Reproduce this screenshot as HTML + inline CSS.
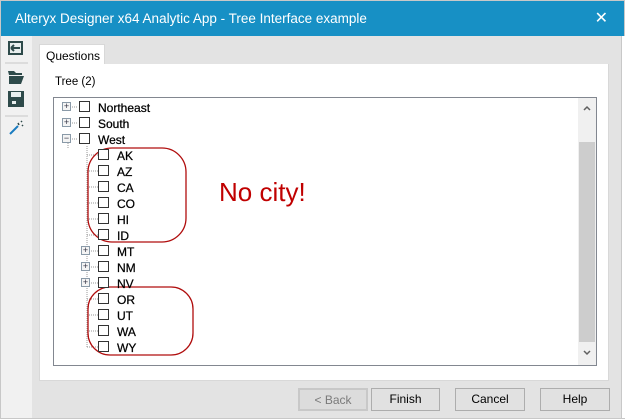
<!DOCTYPE html>
<html><head><style>
*{margin:0;padding:0;box-sizing:border-box}
body{width:625px;height:419px;background:#e3e3e3;font-family:"Liberation Sans",sans-serif;font-size:12px;position:relative;overflow:hidden;color:#000}
.a{position:absolute}
.title{left:0;top:0;width:625px;height:36px;background:#1790c5;color:#fff;font-size:13.5px;line-height:36px;padding-left:14px;border:1px solid #c8c8c8;border-bottom:none}
.cb{position:absolute;width:11px;height:11px;border:1px solid #333;background:#fff}
.ex{position:absolute;width:9px;height:9px;border:1px solid #8a9aa8;background:#f4f4f4;font-size:9px;line-height:7px;text-align:center;color:#334}
.t{position:absolute;font-size:12px;color:#000;-webkit-text-stroke:0.25px #000}
.btn{position:absolute;top:388px;height:23px;border:1px solid #adadad;background:#e1e1e1;text-align:center;line-height:21px;font-size:12px}
</style></head><body>
<div class="a title">Alteryx Designer x64 Analytic App - Tree Interface example<span style="position:absolute;right:16px;top:0;font-size:16px">✕</span></div>
<div class="a" style="left:0;top:36px;width:32px;height:383px;background:#f1f1f1;border-left:1px solid #c8c8c8"></div>
<div class="a" style="left:621px;top:36px;width:4px;height:383px;background:#fff;border-left:1px solid #c8c8c8"></div>
<svg class="a" style="left:0;top:36px" width="32" height="110">
<rect x="8" y="5" width="15" height="14" fill="#2e4a4a"/><rect x="10" y="7" width="11" height="10" fill="#e8eeee"/><path d="M11 12h9M11 12l3-3M11 12l3 3" stroke="#2e4a4a" stroke-width="2" fill="none"/>
<line x1="5" y1="27" x2="28" y2="27" stroke="#c8c8c8"/>
<path d="M8 35h6l2 2h6v2h-13z" fill="#2e4a4a"/><path d="M9 40h15l-3 8h-12z" fill="#2e4a4a"/>
<rect x="8" y="55" width="16" height="16" fill="#2e4a4a"/><rect x="11" y="56" width="10" height="5" fill="#e8eeee"/><rect x="12" y="65" width="4" height="3" fill="#e8eeee"/>
<line x1="5" y1="80" x2="28" y2="80" stroke="#c8c8c8"/>
<path d="M10 98l8-8" stroke="#1a7cc0" stroke-width="2"/><path d="M18 87l1 2M22 89l1 1M21 85l1 1" stroke="#2e4a4a" stroke-width="1.5"/>
</svg>
<div class="a" style="left:39px;top:44px;width:66px;height:21px;background:#fff;border:1px solid #d8d8d8;border-bottom:none;padding:4px 0 0 6px;font-size:12px">Questions</div>
<div class="a" style="left:39px;top:64px;width:570px;height:317px;background:#fff;border:1px solid #d8d8d8;border-top:none"></div>
<div class="a" style="left:55px;top:76px;font-size:11.5px">Tree (2)</div>
<div class="a" style="left:53px;top:97px;width:544px;height:269px;border:1px solid #828790;background:#fff"></div>
<div class="a" style="left:578px;top:98px;width:18px;height:267px;background:#f0f0f0"></div>
<div class="a" style="left:579px;top:142px;width:16px;height:200px;background:#cdcdcd"></div>
<svg class="a" style="left:578px;top:98px" width="18" height="267">
<path d="M6 12l3-3 3 3M6 253l3 3 3-3" stroke="#606060" stroke-width="1.5" fill="none"/>
</svg>
<svg class="a" style="left:0;top:0" width="625" height="419">
<g stroke="#999" stroke-dasharray="1,1" fill="none">
<path d="M72 107h6M72 123h6M72 139h6M68 143v5"/>
<path d="M87 146v201M87 155h11M87 171h11M87 187h11M87 203h11M87 219h11M87 235h11M91 251h7M91 267h7M91 283h7M87 299h11M87 315h11M87 331h11M87 347h11"/>
</g>
<g fill="none" stroke="#b00d0d" stroke-width="1.3">
<rect x="88" y="148" width="98" height="94" rx="24"/>
<rect x="88" y="287" width="105" height="68" rx="22"/>
</g>
</svg>
<div class="ex" style="left:62px;top:102px">+</div>
<div class="ex" style="left:62px;top:118px">+</div>
<div class="ex" style="left:62px;top:134px">−</div>
<div class="ex" style="left:81px;top:246px">+</div>
<div class="ex" style="left:81px;top:262px">+</div>
<div class="ex" style="left:81px;top:278px">+</div>
<div class="cb" style="left:79px;top:101px"></div><div class="t" style="left:98px;top:101px">Northeast</div>
<div class="cb" style="left:79px;top:117px"></div><div class="t" style="left:98px;top:117px">South</div>
<div class="cb" style="left:79px;top:133px"></div><div class="t" style="left:98px;top:133px">West</div>
<div class="cb" style="left:98px;top:149px"></div><div class="t" style="left:117px;top:149px">AK</div>
<div class="cb" style="left:98px;top:165px"></div><div class="t" style="left:117px;top:165px">AZ</div>
<div class="cb" style="left:98px;top:181px"></div><div class="t" style="left:117px;top:181px">CA</div>
<div class="cb" style="left:98px;top:197px"></div><div class="t" style="left:117px;top:197px">CO</div>
<div class="cb" style="left:98px;top:213px"></div><div class="t" style="left:117px;top:213px">HI</div>
<div class="cb" style="left:98px;top:229px"></div><div class="t" style="left:117px;top:229px">ID</div>
<div class="cb" style="left:98px;top:245px"></div><div class="t" style="left:117px;top:245px">MT</div>
<div class="cb" style="left:98px;top:261px"></div><div class="t" style="left:117px;top:261px">NM</div>
<div class="cb" style="left:98px;top:277px"></div><div class="t" style="left:117px;top:277px">NV</div>
<div class="cb" style="left:98px;top:293px"></div><div class="t" style="left:117px;top:293px">OR</div>
<div class="cb" style="left:98px;top:309px"></div><div class="t" style="left:117px;top:309px">UT</div>
<div class="cb" style="left:98px;top:325px"></div><div class="t" style="left:117px;top:325px">WA</div>
<div class="cb" style="left:98px;top:341px"></div><div class="t" style="left:117px;top:341px">WY</div>
<div class="a" style="left:219px;top:177px;font-size:26px;color:#c00000">No city!</div>
<div class="btn" style="left:298px;width:70px;border:2px solid #c8c8c8;background:#dcdcdc;color:#7a7a7a">&lt; Back</div>
<div class="btn" style="left:371px;width:69px">Finish</div>
<div class="btn" style="left:455px;width:70px">Cancel</div>
<div class="btn" style="left:540px;width:70px">Help</div>
<div class="a" style="left:0;top:418px;width:625px;height:1px;background:#c8c8c8"></div>
</body></html>
